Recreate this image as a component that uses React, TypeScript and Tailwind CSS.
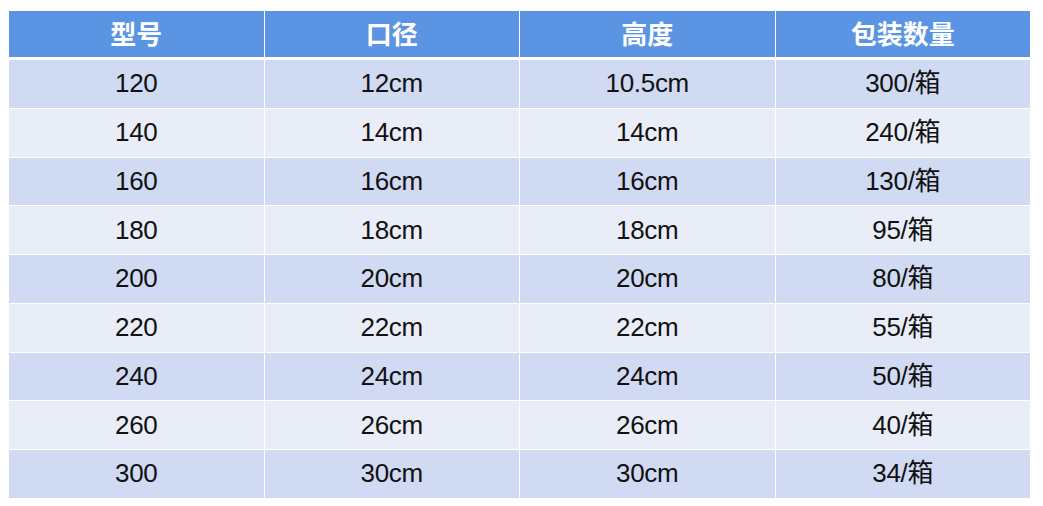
const headers = ['型号', '口径', '高度', '包装数量'];

const rows = [
  ['120', '12cm', '10.5cm', '300/箱'],
  ['140', '14cm', '14cm', '240/箱'],
  ['160', '16cm', '16cm', '130/箱'],
  ['180', '18cm', '18cm', '95/箱'],
  ['200', '20cm', '20cm', '80/箱'],
  ['220', '22cm', '22cm', '55/箱'],
  ['240', '24cm', '24cm', '50/箱'],
  ['260', '26cm', '26cm', '40/箱'],
  ['300', '30cm', '30cm', '34/箱'],
];

export default function App() {
  return (
    <div className="h-[506px] w-[1043px] bg-white pl-[9px] pt-[11px] font-['Liberation_Sans','Noto_Sans_CJK_SC',sans-serif]">
      <div className="flex w-[1021px] flex-col gap-px">
        <div className="mb-[2px] grid h-[46px] grid-cols-4 gap-px">
          {headers.map((h) => (
            <div
              key={h}
              className="flex items-center justify-center bg-[#5b94e3] pt-[3px] text-[26px] font-bold text-white"
            >
              {h}
            </div>
          ))}
        </div>
        {rows.map((r, i) => (
          <div key={r[0]} className="grid h-[47.75px] grid-cols-4 gap-px">
            {r.map((c, j) => (
              <div
                key={j}
                className={`flex items-center justify-center text-[26px] tracking-[-0.3px] text-[#111] ${
                  i % 2 === 0 ? 'bg-[#d0daf2]' : 'bg-[#e8edf8]'
                }`}
              >
                {c}
              </div>
            ))}
          </div>
        ))}
      </div>
    </div>
  );
}
